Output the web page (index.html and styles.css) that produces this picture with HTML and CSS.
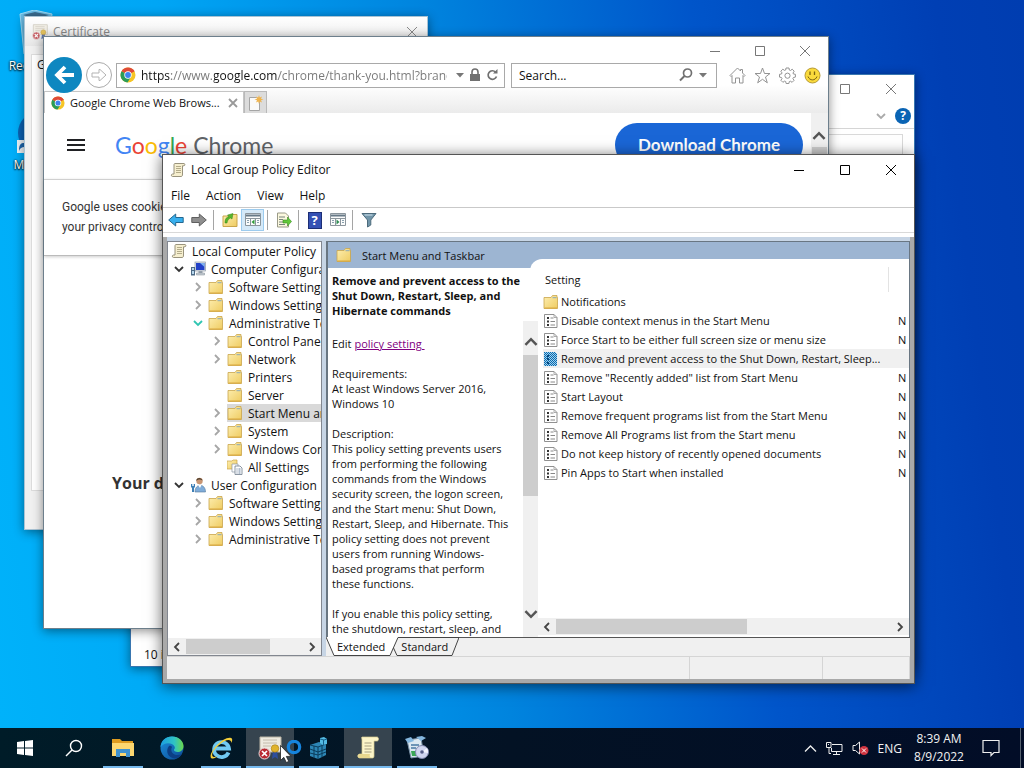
FILE: index.html
```html
<!DOCTYPE html>
<html lang="en">
<head>
<meta charset="utf-8">
<title>Desktop</title>
<link rel="stylesheet" href="styles.css">
</head>
<body>
<svg class="defs" aria-hidden="true">
  <defs>
    <linearGradient id="g-folder" x1="0" y1="0" x2="1" y2="1"><stop offset="0" stop-color="#fdeeb0"/><stop offset="1" stop-color="#efcc62"/></linearGradient>
    <linearGradient id="g-edge" x1="0" y1="0" x2="1" y2="0"><stop offset="0" stop-color="#1b9de2"/><stop offset=".6" stop-color="#2fc3c4"/><stop offset="1" stop-color="#6bd84a"/></linearGradient>
    <linearGradient id="g-edge2" x1="0" y1="0" x2="1" y2="1"><stop offset="0" stop-color="#1c8fdc"/><stop offset="1" stop-color="#0b4a94"/></linearGradient>
    <symbol id="folder" viewBox="0 0 16 16"><path d="M1 3.500h7l1.500-2h4.500v2h.5v11H1z" fill="url(#g-folder)" stroke="#c9a54b" stroke-width=".8"/><path d="M9.500 3.700h4" stroke="#8ba9b8" stroke-width="1"/><path d="M1.500 14h12.500" stroke="#dba93e"/></symbol>
    <symbol id="scroll" viewBox="0 0 16 16"><path d="M5 1.500h9c1 0 1.300 2 0 2.300h-1.500v8.200c0 2-.5 2.500-1.500 2.500H2.500c-1.500 0-1.500-2.500 0-2.500H4V3c0-1 .3-1.500 1-1.500z" fill="#f6efcf" stroke="#8d8770" stroke-width=".9"/><path d="M6 4.500h5M6 6.500h5M6 8.500h5M6 10.500h5" stroke="#a39a78" stroke-width=".8"/></symbol>
    <symbol id="computer" viewBox="0 0 16 16"><rect x="5" y="1" width="10.500" height="9" fill="#dfe4ea" stroke="#8d98a5" stroke-width=".7"/><path d="M6 2h8.500v7H6z" fill="#2140c8"/><path d="M10 2h4.500v4z" fill="#7fb0ee"/><path d="M8.500 10h4v2h-4z" fill="#98a2ad"/><path d="M6.500 12h8v2h-8z" fill="#c8ced5" stroke="#7e8893" stroke-width=".5"/><path d="M1 6h4v8.500H1z" fill="#4d6a85"/><path d="M2 7h2v2H2zM2 10h2v3H2z" fill="#b7d7ed"/></symbol>
    <symbol id="user" viewBox="0 0 16 16"><circle cx="9.500" cy="4" r="3.200" fill="#c99673"/><path d="M6.300 4C6 0 12 0 12.500 3.500 10 2 8 2.500 6.300 4z" fill="#51402e"/><path d="M5 15c0-9 10.500-9 10.500 0z" fill="#7facd9" stroke="#56789b" stroke-width=".6"/><path d="M8 8l2 3 1.500-3z" fill="#fff"/><path d="M1 7h1.300v2h1.400V7H5v3l-1 1v4H2v-4l-1-1z" fill="#3e7fb5"/></symbol>
    <symbol id="allset" viewBox="0 0 16 16"><path d="M0 2h5l1-1h4v9H0z" fill="url(#g-folder)" stroke="#c9a54b" stroke-width=".7"/><path d="M5 5h6v8H5z" fill="#fff" stroke="#8b97a5" stroke-width=".7"/><path d="M8 7h5l2 2v6.500H8z" fill="#fff" stroke="#6d7b8c" stroke-width=".8"/><path d="M9.500 10h1M9.500 12h1M9.500 14h1M11.500 10h2M11.500 12h2M11.500 14h2" stroke="#3d5d84" stroke-width=".8"/></symbol>
    <symbol id="policy" viewBox="0 0 16 16"><path d="M1.500 1.500h9.500l3 3v10H1.500z" fill="#fff" stroke="#858585" stroke-width=".9"/><path d="M11 1.500v3h3" fill="none" stroke="#999" stroke-width=".8"/><path d="M4 4h2v2H4zM4 7.500h2v2H4zM4 11h2v2H4z" fill="#333"/><path d="M7.500 5h3M7.500 8.500h4.500M7.500 12h4.500" stroke="#888"/></symbol>
    <pattern id="dither" width="2" height="2" patternUnits="userSpaceOnUse"><rect width="2" height="2" fill="#9fd0ee"/><path d="M0 0h1v1H0zM1 1h1v1H1z" fill="#0a6aae"/></pattern>
    <symbol id="policysel" viewBox="0 0 16 16"><path d="M1 1h11l2 2v12H1z" fill="url(#dither)"/><path d="M4 4h2v2H4zM4 7h2v2H4zM4 11h2v2H4z" fill="#064a80"/></symbol>
    <symbol id="chrome" viewBox="0 0 16 16"><circle cx="8" cy="8" r="7.500" fill="#f6c526"/><path d="M8 8L1.500 4.250A7.500 7.500 0 0 1 14.500 4.250z" fill="#df4a37"/><path d="M8 8L1.500 4.250A7.500 7.500 0 0 0 7.500 15.500L11 9.700z" fill="#2a9c58"/><path d="M8 4.300h6.500L14 3.500 8 3z" fill="#df4a37"/><circle cx="8" cy="8" r="3.700" fill="#fff"/><circle cx="8" cy="8" r="2.900" fill="#3f83ee"/></symbol>
    <symbol id="chev-r" viewBox="0 0 10 10"><path d="M3 1l4 4-4 4" fill="none" stroke="currentColor" stroke-width="1.800"/></symbol>
    <symbol id="chev-l" viewBox="0 0 10 10"><path d="M7 1L3 5l4 4" fill="none" stroke="currentColor" stroke-width="1.800"/></symbol>
    <symbol id="chev-d" viewBox="0 0 10 10"><path d="M1 3l4 4 4-4" fill="none" stroke="currentColor" stroke-width="1.800"/></symbol>
    <symbol id="chev-u" viewBox="0 0 10 10"><path d="M1 7l4-4 4 4" fill="none" stroke="currentColor" stroke-width="1.800"/></symbol>
    <symbol id="w-min" viewBox="0 0 12 12"><path d="M1 6.500h10" stroke="currentColor"/></symbol>
    <symbol id="w-max" viewBox="0 0 12 12"><path d="M1.500 1.500h9v9h-9z" fill="none" stroke="currentColor"/></symbol>
    <symbol id="w-close" viewBox="0 0 12 12"><path d="M1 1l10 10M11 1L1 11" fill="none" stroke="currentColor"/></symbol>
    <symbol id="cert" viewBox="0 0 24 24"><path d="M2 1h21v15H2z" fill="#eeeadf" stroke="#b9b3a4"/><path d="M5 4h14M5 7h14M5 10h8" stroke="#b7b0a0" stroke-width=".8"/><path d="M15 15l-1 8 3-2 3 2-1-8z" fill="#2e4f9d"/><circle cx="17" cy="12.500" r="3.800" fill="#e0b32c" stroke="#a47b12" stroke-width=".6"/><circle cx="6.500" cy="17.500" r="5.500" fill="#b92a31" stroke="#e9dcdc"/><path d="M4 15l5 5M9 15l-5 5" stroke="#fff" stroke-width="1.700"/></symbol>
    <symbol id="mmc" viewBox="0 0 18 16"><path d="M1.500 1.500h15v12h-15z" fill="#fbfcfc" stroke="#8b959c"/><path d="M2 3.500h14" stroke="#667987" stroke-width="2"/><path d="M2 6.500h14M6.500 7v6M11.500 7v6" stroke="#8b959c"/><path d="M3 8.500h2M3 10.500h2M13 8.500h2M13 10.500h2" stroke="#8aa0ae"/></symbol>
  </defs>
</svg>

<main class="desktop">
  <div class="shortcut bin">
    <svg width="48" height="48" viewBox="0 0 48 48"><path d="M4 4L18 0l18 4-5 40-16 3-7-3z" fill="#8fc5e5" opacity=".75" stroke="#d5ecf7"/><path d="M7 5l12-3 14 3-13 4z" fill="#3c6f93"/></svg>
    <span>Recycle Bin</span>
  </div>
  <div class="shortcut edge">
    <svg width="48" height="48" viewBox="0 0 48 48"><circle cx="24" cy="24" r="22" fill="#0b62b4"/><path d="M1 31h13v13H1z" fill="#eef4f8"/><path d="M3 42c0-7 2-8 5-8v-3l5 5-5 5v-3c-2 0-4 1-5 4z" fill="#1c66ae"/></svg>
    <span>Microsoft<br>Edge</span>
  </div>

  <section class="window cert" aria-label="Certificate">
    <header class="cert-title"><svg class="i16"><use href="#cert"/></svg><h2>Certificate</h2><button aria-label="Close"><svg class="i12"><use href="#w-close"/></svg></button></header>
    <div class="cert-body"><div class="cert-panel">General</div></div>
  </section>

  <section class="window files" aria-label="File Explorer">
    <div class="caption"><button aria-label="Maximize"><svg class="i12"><use href="#w-max"/></svg></button><button aria-label="Close"><svg class="i12"><use href="#w-close"/></svg></button></div>
    <div class="ribbon"><svg class="i10"><use href="#chev-d"/></svg><button class="help" aria-label="Help">?</button></div>
    <div class="files-bar"><div class="files-search"></div></div>
    <footer>10 items</footer>
  </section>

  <section class="window ie" aria-label="Internet Explorer">
    <div class="caption"><button aria-label="Minimize"><svg class="i12"><use href="#w-min"/></svg></button><button aria-label="Maximize"><svg class="i12"><use href="#w-max"/></svg></button><button aria-label="Close"><svg class="i12"><use href="#w-close"/></svg></button></div>
    <div class="navbar">
      <button class="back" aria-label="Back"><svg width="24" height="24" viewBox="0 0 24 24"><path d="M13 4l-8 8 8 8M5 12h17" fill="none" stroke="#fff" stroke-width="3.800"/></svg></button>
      <button class="fwd" aria-label="Forward"><svg width="16" height="16" viewBox="0 0 16 16"><path d="M1 6h7V2.500h1L15 8l-6 5.500H8V10H1z" fill="#fff" stroke="#b3b3b3"/></svg></button>
      <div class="address">
        <svg class="i16"><use href="#chrome"/></svg>
        <input aria-label="Address" value="https://www.google.com/chrome/thank-you.html?brand=USED">
        <svg width="8" height="5" viewBox="0 0 8 5"><path d="M0 0h8L4 4.500z" fill="#777"/></svg>
        <svg width="12" height="14" viewBox="0 0 12 14"><path d="M1 6h10v7H1z" fill="#707070"/><path d="M3 6V4a3 3 0 0 1 6 0v2" fill="none" stroke="#707070" stroke-width="1.600"/></svg>
        <svg width="13" height="14" viewBox="0 0 13 14"><path d="M10.500 8.500a4.300 4.300 0 1 1-1-4.500" fill="none" stroke="#707070" stroke-width="1.700"/><path d="M7 5.500h4.500V1z" fill="#707070"/></svg>
      </div>
      <div class="search">
        <input aria-label="Search" placeholder="Search...">
        <svg width="14" height="14" viewBox="0 0 14 14"><circle cx="8.500" cy="5" r="4" fill="none" stroke="#707070" stroke-width="1.700"/><path d="M5.500 8L1 12.500" stroke="#707070" stroke-width="2"/></svg>
        <svg width="8" height="5" viewBox="0 0 8 5"><path d="M0 0h8L4 4.500z" fill="#777"/></svg>
      </div>
      <div class="ie-tools">
        <button aria-label="Home"><svg width="17" height="17" viewBox="0 0 17 17"><path d="M1 8.500L8.500 1l3 3V2.500h2V6L16 8.500l-1 1-1-1V16h-3.500v-5h-4v5H3V8.500l-1 1z" fill="#fff" stroke="#939393"/></svg></button>
        <button aria-label="Favorites"><svg width="17" height="17" viewBox="0 0 17 17"><path d="M8.500 1l2 5.500H16l-4.500 3.500 1.800 5.800-4.800-3.500-4.800 3.500L5.500 10 1 6.500h5.500z" fill="#fff" stroke="#939393"/></svg></button>
        <button aria-label="Tools"><svg width="17" height="17" viewBox="0 0 17 17"><path d="M7 1h3l.3 2 1.200.5 1.700-1.300 2 2L14 6l.4 1 2 .3v2.800l-2 .4-.5 1.100 1.200 1.700-2 2-1.700-1.100-1.100.4-.4 1.900H7.100l-.4-2-1.100-.4-1.700 1.200-2-2L3 11.600l-.5-1.100-2-.4V7.300l2-.3.500-1.100-1.200-1.700 2-2 1.700 1.200L6.700 3z" fill="#fff" stroke="#939393"/><circle cx="8.500" cy="8.700" r="2.600" fill="#fff" stroke="#939393"/></svg></button>
        <button aria-label="Feedback"><svg width="17" height="17" viewBox="0 0 17 17"><circle cx="8.500" cy="8.500" r="7.500" fill="#fada3c" stroke="#b69a35"/><path d="M6 4.500v3.500M10.500 4.500v3.500" stroke="#7c6412" stroke-width="1.300"/><path d="M4 9.500c1.500 4.500 7.500 4.500 9 0" fill="none" stroke="#7c6412"/></svg></button>
      </div>
    </div>
    <div class="tabs">
      <div class="tab"><svg class="i14"><use href="#chrome"/></svg><span>Google Chrome Web Brows...</span><button aria-label="Close tab"><svg width="10" height="10" viewBox="0 0 10 10"><path d="M1 1l8 8M9 1L1 9" stroke="#999" stroke-width="1.800"/></svg></button></div>
      <button class="newtab" aria-label="New tab"><svg width="16" height="18" viewBox="0 0 16 18"><path d="M1.500 3.500h7l3 3v10h-10z" fill="#fafafa" stroke="#a5a5a5"/><path d="M11 1l.8 2.500L14 2.500l-1 2.200 2.500.8-2.500.8 1 2.200-2.200-1L11 10l-.8-2.500-2.200 1 1-2.200-2.500-.8L9 4.700 8 2.500l2.200 1z" fill="#efb44d"/></svg></button>
    </div>
    <div class="page">
      <div class="page-main">
        <div class="page-head">
          <button class="burger" aria-label="Menu"><svg width="18" height="14" viewBox="0 0 18 14"><path d="M0 2h18M0 7h18M0 12h18" stroke="#202124" stroke-width="2"/></svg></button>
          <div class="logo"><b class="blue">G</b><b class="red">o</b><b class="yellow">o</b><b class="blue">g</b><b class="green">l</b><b class="red">e</b> <span>Chrome</span></div>
          <a class="download" href="#">Download Chrome</a>
        </div>
        <div class="cookies">Google uses cookies to deliver its services.<br>your privacy controls.</div>
        <h1>Your download is starting</h1>
      </div>
      <div class="page-scroll"><svg width="14" height="14"><use href="#chev-u"/></svg><i></i></div>
    </div>
  </section>

  <section class="window gp" aria-label="Local Group Policy Editor">
    <header class="gp-title"><svg class="i16"><use href="#scroll"/></svg><h2>Local Group Policy Editor</h2>
      <div class="caption"><button aria-label="Minimize"><svg class="i12"><use href="#w-min"/></svg></button><button aria-label="Maximize"><svg class="i12"><use href="#w-max"/></svg></button><button aria-label="Close"><svg class="i12"><use href="#w-close"/></svg></button></div>
    </header>
    <nav class="menu"><button>File</button><button>Action</button><button>View</button><button>Help</button></nav>
    <div class="toolbar">
      <button aria-label="Back"><svg width="16" height="16" viewBox="0 0 16 16"><path d="M.7 8l7-6v3.500h7.500v5H7.700V14z" fill="#38b0ee" stroke="#24678f"/></svg></button>
      <button aria-label="Forward"><svg width="16" height="16" viewBox="0 0 16 16"><path d="M15.300 8l-7-6v3.500H.8v5h7.500V14z" fill="#8f8f8f" stroke="#5f5f5f"/></svg></button>
      <i></i>
      <button aria-label="Up"><svg width="16" height="16" viewBox="0 0 16 16"><path d="M1 4h8l1-1.500h5v12H1z" fill="url(#g-folder)" stroke="#c9a54b"/><path d="M3 11c0-5 2-6 4-6L5.500 3 11 1.500 10 7 8.500 6C6.500 7 5.500 8 5 11z" fill="#57b52c" stroke="#37841a" stroke-width=".5"/></svg></button>
      <button class="on" aria-label="Show console tree"><svg width="18" height="16" viewBox="0 0 18 16"><use href="#mmc"/><path d="M10.500 7.500v5L7.500 10z" fill="#2f9c39"/></svg></button>
      <i></i>
      <button aria-label="Export list"><svg width="16" height="16" viewBox="0 0 16 16"><path d="M1.500 1h8l3 3v11h-11z" fill="#fbf8df" stroke="#9a9a88"/><path d="M3 5h6M3 7.500h4M3 10h4M3 12.500h6" stroke="#77837d"/><path d="M7 8h4.500V5l4 4.500-4 4.500v-3H7z" fill="#62c83b" stroke="#3b8d22" stroke-width=".6"/></svg></button>
      <i></i>
      <button class="q" aria-label="Help"><span>?</span></button>
      <button aria-label="Show action pane"><svg width="18" height="16" viewBox="0 0 18 16"><use href="#mmc"/><path d="M7.500 7.500v5l3-2.500z" fill="#2f8c52"/></svg></button>
      <i></i>
      <button aria-label="Filter"><svg width="16" height="16" viewBox="0 0 16 16"><path d="M1 1.500h14L9.800 8v5L6.500 15V8z" fill="#7195a9" stroke="#4d6b7c"/><path d="M3.500 3h8" stroke="#bcd3df" stroke-width="1.300"/></svg></button>
    </div>
    <div class="client">
      <div class="panes">
        <div class="tree">
          <ul>
            <li class="l0"><svg class="i16"><use href="#scroll"/></svg>Local Computer Policy</li>
            <li class="l1"><svg class="tw dark"><use href="#chev-d"/></svg><svg class="i16"><use href="#computer"/></svg>Computer Configuration</li>
            <li class="l2"><svg class="tw"><use href="#chev-r"/></svg><svg class="i16"><use href="#folder"/></svg>Software Settings</li>
            <li class="l2"><svg class="tw"><use href="#chev-r"/></svg><svg class="i16"><use href="#folder"/></svg>Windows Settings</li>
            <li class="l2"><svg class="tw teal"><use href="#chev-d"/></svg><svg class="i16"><use href="#folder"/></svg>Administrative Templates</li>
            <li class="l3"><svg class="tw"><use href="#chev-r"/></svg><svg class="i16"><use href="#folder"/></svg>Control Panel</li>
            <li class="l3"><svg class="tw"><use href="#chev-r"/></svg><svg class="i16"><use href="#folder"/></svg>Network</li>
            <li class="l3"><svg class="tw"></svg><svg class="i16"><use href="#folder"/></svg>Printers</li>
            <li class="l3"><svg class="tw"></svg><svg class="i16"><use href="#folder"/></svg>Server</li>
            <li class="l3"><svg class="tw"><use href="#chev-r"/></svg><span class="sel"><svg class="i16"><use href="#folder"/></svg>Start Menu and Taskbar</span></li>
            <li class="l3"><svg class="tw"><use href="#chev-r"/></svg><svg class="i16"><use href="#folder"/></svg>System</li>
            <li class="l3"><svg class="tw"><use href="#chev-r"/></svg><svg class="i16"><use href="#folder"/></svg>Windows Components</li>
            <li class="l3"><svg class="tw"></svg><svg class="i16"><use href="#allset"/></svg>All Settings</li>
            <li class="l1"><svg class="tw dark"><use href="#chev-d"/></svg><svg class="i16"><use href="#user"/></svg>User Configuration</li>
            <li class="l2"><svg class="tw"><use href="#chev-r"/></svg><svg class="i16"><use href="#folder"/></svg>Software Settings</li>
            <li class="l2"><svg class="tw"><use href="#chev-r"/></svg><svg class="i16"><use href="#folder"/></svg>Windows Settings</li>
            <li class="l2"><svg class="tw"><use href="#chev-r"/></svg><svg class="i16"><use href="#folder"/></svg>Administrative Templates</li>
          </ul>
          <div class="hbar"><svg class="i10"><use href="#chev-l"/></svg><div class="track"><i class="t-tree"></i></div><svg class="i10"><use href="#chev-r"/></svg></div>
        </div>
        <div class="detail">
          <div class="view">
            <div class="view-head"><svg class="i16"><use href="#folder"/></svg>Start Menu and Taskbar</div>
            <div class="split">
              <div class="info">
                <h3>Remove and prevent access to the Shut Down, Restart, Sleep, and Hibernate commands</h3>
                <div class="info-row">
                  <div class="desc">
                    <p>Edit <a href="#">policy setting&nbsp;</a></p>
                    <p>Requirements:<br>At least Windows Server 2016,<br>Windows 10</p>
                    <p>Description:<br>This policy setting prevents users<br>from performing the following<br>commands from the Windows<br>security screen, the logon screen,<br>and the Start menu: Shut Down,<br>Restart, Sleep, and Hibernate. This<br>policy setting does not prevent<br>users from running Windows-<br>based programs that perform<br>these functions.</p>
                    <p>If you enable this policy setting,<br>the shutdown, restart, sleep, and</p>
                  </div>
                  <div class="vbar"><svg width="14" height="14"><use href="#chev-u"/></svg><div class="vtrack"><i></i></div><svg width="14" height="14"><use href="#chev-d"/></svg></div>
                </div>
              </div>
              <div class="list">
                <table>
                  <thead><tr><th>Setting</th><th class="st" aria-label="State"></th></tr></thead>
                  <tbody>
                    <tr><td><svg class="i16"><use href="#folder"/></svg>Notifications</td><td></td></tr>
                    <tr><td><svg class="i16"><use href="#policy"/></svg>Disable context menus in the Start Menu</td><td>N</td></tr>
                    <tr><td><svg class="i16"><use href="#policy"/></svg>Force Start to be either full screen size or menu size</td><td>N</td></tr>
                    <tr class="cur"><td><svg class="i16"><use href="#policysel"/></svg>Remove and prevent access to the Shut Down, Restart, Sleep...</td><td></td></tr>
                    <tr><td><svg class="i16"><use href="#policy"/></svg>Remove "Recently added" list from Start Menu</td><td>N</td></tr>
                    <tr><td><svg class="i16"><use href="#policy"/></svg>Start Layout</td><td>N</td></tr>
                    <tr><td><svg class="i16"><use href="#policy"/></svg>Remove frequent programs list from the Start Menu</td><td>N</td></tr>
                    <tr><td><svg class="i16"><use href="#policy"/></svg>Remove All Programs list from the Start menu</td><td>N</td></tr>
                    <tr><td><svg class="i16"><use href="#policy"/></svg>Do not keep history of recently opened documents</td><td>N</td></tr>
                    <tr><td><svg class="i16"><use href="#policy"/></svg>Pin Apps to Start when installed</td><td>N</td></tr>
                  </tbody>
                </table>
                <div class="hbar"><svg class="i10"><use href="#chev-l"/></svg><div class="track"><i class="t-list"></i></div><svg class="i10"><use href="#chev-r"/></svg></div>
              </div>
            </div>
          </div>
          <div class="sheet-tabs">
            <svg width="10" height="19" viewBox="0 0 10 19"><path d="M0 0h10v18H8z" fill="#fff"/><path d="M0 0l8 18.500h2" fill="none" stroke="#444"/></svg>
            <button class="active">Extended</button>
            <svg width="14" height="19" viewBox="0 0 14 19"><path d="M0 0h12L4 18H0z" fill="#fff"/><path d="M0 18.500h4L12 .5h2M7.500 11l3.500 7.500h3" fill="none" stroke="#444"/></svg>
            <button>Standard</button>
            <svg width="10" height="19" viewBox="0 0 10 19"><path d="M0 18.500h3L10 .5M0 .5h10" fill="none" stroke="#444"/></svg>
            <div class="rest"></div>
          </div>
        </div>
      </div>
      <div class="status"><span></span><span></span><span></span></div>
    </div>
  </section>
</main>

<footer class="taskbar">
  <button class="task start" aria-label="Start"><svg width="16" height="16" viewBox="0 0 16 16"><path d="M0 2l7-1v6.500H0zM8 1l8-1v7.500H8zM0 8.500h7V15l-7-1zM8 8.500h8V16l-8-1z" fill="#fff"/></svg></button>
  <button class="task" aria-label="Search"><svg width="18" height="18" viewBox="0 0 18 18"><circle cx="11" cy="7" r="5.500" fill="none" stroke="#fff" stroke-width="1.400"/><path d="M7 11l-6 6" stroke="#fff" stroke-width="1.400"/></svg></button>
  <button class="task open" aria-label="File Explorer"><svg width="24" height="20" viewBox="0 0 24 20"><path d="M1 1h8l2 2h11v4H1z" fill="#dd9b20"/><path d="M1 5h22v13H1z" fill="#fcd770"/><path d="M5 11h14v8h-4v-4H9v4H5z" fill="#3f92cf"/></svg></button>
  <button class="task" aria-label="Microsoft Edge"><svg width="24" height="24" viewBox="0 0 24 24"><circle cx="12" cy="12" r="11.500" fill="url(#g-edge2)"/><path d="M.5 11C1 4.500 6 .5 12 .5c7 0 11.500 5 11.500 9.500 0 4-3 6-6 6-2 0-4-1-3.500-2.500 1-1 1-2 .5-3C12 6 4 6 .5 11z" fill="url(#g-edge)"/><path d="M9 10c-4 5-1 12 6 12.500 3-.5 5.500-2 7-4.500-4 2-8 1-9.500-1C11 15 11 13 12 11c-.5-1-2-1.500-3-1z" fill="#0c3f85"/></svg></button>
  <button class="task open" aria-label="Internet Explorer"><svg width="24" height="24" viewBox="0 0 24 24"><path d="M19.500 16.500A7.500 7.500 0 1 1 20 12.500H6" fill="none" stroke="#71c9f2" stroke-width="3.800"/><path d="M2 22C-1 17 14 0 22 2c2 1 1 3 .5 5C22 2 16 4 10 9S1 20 5 21c2 0 4-1 5-2-3 3-6 4.500-8 3z" fill="#f5cf3a"/></svg></button>
  <button class="task open wide" aria-label="Certificate"><svg width="24" height="24"><use href="#cert"/></svg></button>
  <button class="task open" aria-label="Registry Editor"><svg width="22" height="24" viewBox="0 0 22 24"><path d="M2 9l9-3 7 2v11l-8 4-8-3z" fill="#2d86b5"/><path d="M2 9l8 2 8-3M2 13l8 3 8-3M2 17l8 2 8-3M6 10v12M10 11v12M14 10v11" stroke="#0b3c5b" fill="none"/><path d="M12 2l4-1 3 2v5l-4 1-3-2z" fill="#55bce5"/><path d="M12 3l4 1 3-1M15.500 4v5" stroke="#17618a" fill="none"/></svg></button>
  <button class="task open wide" aria-label="Local Group Policy Editor"><svg width="22" height="24" viewBox="0 0 22 24"><path d="M5 1h15c2 0 2 4 0 4h-3v15c0 2-1 2-2 2H3c-3 0-3-4 0-4h2V4c0-2-1-2 0-3z" fill="#fcf5c9" stroke="#d8cb8d" stroke-width=".7"/><path d="M7.500 7h7M7.500 10h7M7.500 13h7M7.500 16h7" stroke="#a69f80"/><path d="M2 18h11c-1 2 0 4 2 4H3c-2 0-2.500-2-1-4z" fill="#e9d88e"/></svg></button>
  <button class="task open" aria-label="Installer"><svg width="24" height="24" viewBox="0 0 24 24"><path d="M2 4l14-2 3 18-13 2z" fill="#dbe8f1" stroke="#7890a6"/><path d="M0 3l6-2 3 4-6 2zM11 1l6-1 4 2-5 3z" fill="#84b7df"/><path d="M6 9h8M6 12h5" stroke="#4a78a3" stroke-width="1.500"/><path d="M6 15h5v5H7z" fill="#3aa657"/><circle cx="17" cy="16" r="6.500" fill="#cfd5ef" stroke="#8088ad"/><path d="M17 16l5-4a6 6 0 0 1 1 5z" fill="#f3f5ff"/><circle cx="17" cy="16" r="1.800" fill="#555d88"/></svg></button>
  <div class="tray">
    <svg width="13" height="13" viewBox="0 0 13 13"><path d="M1 9.500L6.500 4 12 9.500" fill="none" stroke="#eee" stroke-width="1.300"/></svg>
    <svg width="17" height="15" viewBox="0 0 17 15"><path d="M6 3.500h10v7H5.500V7M10.500 10.500v3M7 13.500h7M.5 1.500h4.500v5H.5zM3 6.500v6h2" fill="none" stroke="#eee"/><path d="M2 3h1v1H2z" fill="#eee"/></svg>
    <svg width="17" height="16" viewBox="0 0 17 16"><path d="M1 5.500h2.500l4-3.500v12l-4-3.500H1z" fill="none" stroke="#eee"/><circle cx="12" cy="10.500" r="4.500" fill="#cf3440"/><path d="M10 8.500l4 4M14 8.500l-4 4" stroke="#fff"/></svg>
    <span>ENG</span>
    <time>8:39 AM<br>8/9/2022</time>
    <svg width="18" height="18" viewBox="0 0 18 18"><path d="M1 1.500h16v12h-5l-3 3v-3H1z" fill="none" stroke="#eee" stroke-width="1.200"/></svg>
  </div>
</footer>
<svg class="pointer" width="24" height="24" viewBox="0 0 24 24" aria-hidden="true"><circle cx="14" cy="7" r="5.700" fill="none" stroke="#1684dd" stroke-width="3.200"/><path d="M.5 5.500v15l3.300-3.200 2.500 5.200 2.500-1.100-2.500-5h4.700z" fill="#fff" stroke="#222" stroke-width=".8"/></svg>
</body>
</html>
```
FILE: styles.css
```css
* { box-sizing: border-box; }
html, body { height: 100%; }
body {
  margin: 0;
  display: flex;
  flex-direction: column;
  overflow: hidden;
  position: relative;
  font: 12px/15px "Open Sans", "Noto Sans", sans-serif;
  color: #111;
}
h1, h2, h3, p, ul { margin: 0; padding: 0; }
h2 { font-size: 12px; font-weight: 400; }
button { border: 0; padding: 0; margin: 0; background: none; font: inherit; color: inherit; display: flex; align-items: center; justify-content: center; }
input { border: 0; padding: 0; min-width: 0; outline: 0; background: none; font: inherit; }
svg { display: block; flex: none; }
.defs { position: absolute; width: 0; height: 0; }
.i10 { width: 10px; height: 10px; }
.i12 { width: 12px; height: 12px; }
.i14 { width: 14px; height: 14px; }
.i16 { width: 16px; height: 16px; }

.desktop {
  flex: 1;
  position: relative;
  overflow: hidden;
  background: linear-gradient(83deg, #00b2fa 0%, #00a6f5 22%, #0084de 46%, #0055ca 70%, #003fb4 92%, #003db0 100%);
}
.shortcut { position: absolute; width: 76px; display: flex; flex-direction: column; align-items: center; gap: 0; color: #fff; text-align: center; text-shadow: 0 1px 2px #000, 0 0 2px #000; white-space: nowrap; }
.bin { left: 2px; top: 10px; }
.edge { left: 2px; top: 109px; }

.window { position: absolute; display: flex; flex-direction: column; background: #fff; border: 1px solid #6d7f8c; box-shadow: 0 2px 10px rgba(0, 0, 0, .45); }
.caption { display: flex; justify-content: flex-end; color: #777; }
.caption button { width: 46px; height: 28px; }

.cert { left: 24px; top: 16px; width: 404px; height: 514px; border-color: #a9c3d4; }
.cert-title { display: flex; align-items: center; gap: 5px; height: 29px; padding: 0 9px 0 7px; background: linear-gradient(#fff, #e6e6e6); color: #888; }
.cert-title h2 { flex: 1; }
.cert-title .i16 { opacity: .75; }
.cert-body { flex: 1; padding: 8px 6px 38px; background: #f0f0f0; }
.cert-panel { height: 100%; padding: 2px 5px; background: #fff; border: 1px solid #dcdcdc; }

.files { left: 130px; top: 74px; width: 785px; height: 593px; border-color: #3876b0; }
.ribbon { display: flex; justify-content: flex-end; align-items: center; gap: 9px; height: 26px; padding-right: 3px; border-bottom: 1px solid #d5d5d5; color: #aaa; }
.help { width: 16px; height: 16px; border-radius: 50%; background: #0a64b4; color: #fff; font-weight: 700; }
.files-bar { flex: 1; padding: 5px 11px; }
.files-search { height: 24px; border: 1px solid #d9d9d9; }
.files footer { height: 24px; padding: 5px 13px; }

.ie { left: 43px; top: 36px; width: 786px; height: 593px; }
.ie > .caption { height: 28px; padding-right: 1px; }
.ie > .caption button { width: 45px; }
.navbar { display: flex; align-items: center; height: 20px; padding: 0 7px 0 2px; position: relative; z-index: 1; }
.back { width: 36px; height: 36px; border-radius: 50%; background: #0e87c0; flex: none; }
.fwd { width: 26px; height: 26px; border: 1px solid #aaa; border-radius: 50%; margin: 0 4px; flex: none; }
.address, .search { display: flex; align-items: center; height: 25px; border: 1px solid #a9a9a9; background: #fff; }
.address { flex: 395 1 395px; gap: 5px; padding: 0 5px 0 3px; }
.address input { flex: 1; margin-right: 4px; color: transparent; background: linear-gradient(90deg, #111 30px, #777 30px, #777 73px, #111 73px, #111 137px, #777 137px); -webkit-background-clip: text; background-clip: text; }
.search { flex: 202 1 202px; margin-left: 6px; padding: 0 9px 0 7px; gap: 6px; }
.search input { flex: 1; }
.search input::placeholder { color: #111; opacity: 1; }
.ie-tools { display: flex; gap: 8px; margin-left: 12px; }
.tabs { display: flex; height: 28px; padding-top: 6px; background: linear-gradient(#fff, #ebebeb); }
.tab { display: flex; align-items: center; gap: 5px; width: 200px; padding: 0 5px 0 6px; background: #fff; border: 1px solid #c5c5c5; border-bottom: 0; white-space: nowrap; font-size: 11px; }
.tab span { flex: 1; }
.newtab { width: 23px; background: #dcdcdc; border: 1px solid #b9b9b9; border-bottom: 0; }
.page { flex: 1; display: flex; }
.page-main { flex: 1; }
.page-head { display: flex; align-items: center; height: 66px; padding: 0 8px 3px 23px; }
.logo { flex: 1; margin-left: 30px; font: 400 23px/28px Lato, sans-serif; color: #5f6368; }
.logo b { font-weight: 400; }
.blue { color: #4285f4; } .red { color: #ea4335; } .yellow { color: #fbbc05; } .green { color: #34a853; }
.download { display: flex; align-items: center; justify-content: center; width: 188px; height: 44px; border-radius: 22px; background: #1a66d6; color: #fff; font: 700 17px/20px Lato, sans-serif; text-decoration: none; }
.cookies { height: 77px; padding: 17px 18px; border-top: 1px solid #d0d0d0; border-bottom: 1px solid #bbb; box-shadow: 0 1px 3px rgba(0, 0, 0, .2); font: 12px/20px Roboto, sans-serif; color: #333; }
.page-main h1 { padding: 217px 0 0 68px; font: 700 16px/20px "Open Sans", sans-serif; color: #333; }
.page-scroll { width: 17px; padding: 16px 1px 0; background: #f0f0f0; color: #555; }
.page-scroll i { display: block; height: 300px; margin-top: 4px; background: #cdcdcd; }

.gp { left: 162px; top: 154px; width: 753px; height: 530px; border-color: #555; box-shadow: 0 2px 14px rgba(0, 0, 0, .6); }
.gp-title { display: flex; align-items: center; height: 29px; padding-left: 7px; gap: 5px; }
.gp-title h2 { flex: 1; }
.gp-title .caption { color: #000; }
.menu { display: flex; height: 24px; padding: 0 0 1px 0; border-bottom: 1px solid #c9c9c9; }
.menu button { padding: 0 8px; }
.toolbar { display: flex; align-items: center; height: 25px; padding-left: 1px; border-bottom: 1px solid #d9d9d9; }
.toolbar button { width: 23px; height: 22px; }
.toolbar i { width: 1px; height: 20px; margin: 0 4px 0 3px; background: #a5a5a5; }
.toolbar .on { background: #d5e9f8; border: 1px solid #9ccbee; }
.q span { width: 14px; height: 17px; background: #3551b4; border: 1px solid #1d2e75; color: #fff; font: 700 13px/15px "Open Sans", sans-serif; }
.client { flex: 1; min-height: 0; display: flex; flex-direction: column; margin-top: 4px; padding: 0 4px 4px; background: #a9a9a9; }
.panes { flex: 1; min-height: 0; display: flex; gap: 4px; padding-top: 4px; background: #c7d5e5; }
.tree { width: 155px; flex: none; display: flex; flex-direction: column; border: 1px solid #828790; background: #fff; }
.tree ul { flex: 1; list-style: none; overflow: hidden; }
.tree li { display: flex; align-items: center; gap: 5px; height: 18px; white-space: nowrap; }
.l0 { padding-left: 3px; }
.l1 { padding-left: 6px; }
.l2 { padding-left: 25px; }
.l3 { padding-left: 44px; }
.tw { width: 10px; height: 10px; color: #a6a6a6; }
.dark { color: #333; margin-right: 1px; }
.teal { color: #30c5b2; }
.sel { display: flex; align-items: center; gap: 5px; height: 18px; background: #d9d9d9; }
.hbar { display: flex; align-items: center; height: 17px; padding: 0 4px; gap: 4px; background: #f0f0f0; color: #444; }
.track { flex: 1; height: 15px; }
.track i { display: block; height: 100%; background: #cdcdcd; }
.t-tree { width: 72%; }
.t-list { width: 57%; }
.detail { flex: 1; min-width: 0; display: flex; flex-direction: column; background: #f0f0f0; font-size: 11px; }
.view { flex: 1; min-height: 0; display: flex; flex-direction: column; border: 2px solid #697682; border-width: 1px 1px 0 2px; background: #9db5d2; }
.view-head { display: flex; align-items: center; gap: 10px; height: 17px; padding: 9px 8px 0; }
.split { flex: 1; min-height: 0; display: flex; }
.info { width: 210px; flex: none; display: flex; flex-direction: column; margin-top: 9px; background: #fff; }
.info h3 { padding: 5px 4px 3px; font-size: 11px; line-height: 15px; font-weight: 700; }
.info-row { flex: 1; min-height: 0; display: flex; position: relative; z-index: 1; background: #fff; }
.desc { flex: 1; overflow: hidden; padding: 15px 0 0 4px; white-space: nowrap; }
.desc p { margin-bottom: 15px; }
.desc a { color: #800080; }
.vbar { width: 15px; display: flex; flex-direction: column; align-items: center; padding: 14px 0 16px; background: #f0f0f0; color: #555; }
.vtrack { flex: 1; align-self: stretch; padding-top: 6px; }
.vtrack i { display: block; height: 56%; background: #cdcdcd; }
.list { flex: 1; min-width: 0; display: flex; flex-direction: column; margin-left: -8px; border-radius: 12px 0 0 0; background: #fff; position: relative; }
.list table { flex: none; width: 100%; margin: 8px 0 auto; padding-left: 13px; border-spacing: 0; table-layout: fixed; }
.list th { height: 25px; padding: 0 0 0 2px; text-align: left; font-weight: 400; border-right: 1px solid #e3e3e3; }
.list .st { width: 20px; border: 0; }
.list td { height: 19px; padding: 0; white-space: nowrap; }
.list td:last-child { padding-left: 9px; }
.list td .i16 { float: left; margin-right: 2px; }
.cur td { background: #f0f0f0; }
.list .hbar { margin: 0 0 2px 8px; }
.sheet-tabs { display: flex; height: 19px; }
.sheet-tabs button { padding: 0 1px; border-bottom: 1px solid #444; }
.sheet-tabs button:not(.active) { border-top: 1px solid #444; }
.sheet-tabs .active { background: #fff; }
.rest { flex: 1; border-top: 1px solid #555; }
.status { display: flex; height: 23px; background: #f0f0f0; border-top: 1px solid #d5d5d5; }
.status span { border-right: 1px solid #d5d5d5; flex: 86; }
.status span:first-child { flex: 523; }
.status span:nth-child(2) { flex: 133; }

.taskbar { flex: none; height: 40px; display: flex; gap: 1px; padding-left: 1px; background: linear-gradient(90deg, #001c28, #031224 50%, #020d27); color: #f2f2f2; }
.task { width: 48px; height: 40px; position: relative; }
.task.open::after { content: ""; position: absolute; left: 4px; right: 4px; bottom: 0; height: 2px; background: #76b9ed; }
.task.wide { background: #36444f; }
.task.wide::after { left: 0; right: 0; }
.tray { margin-left: auto; display: flex; align-items: center; gap: 9px; margin-right: 3px; padding-right: 20px; border-right: 1px solid #56616f; }
.tray time { width: 56px; line-height: 18px; text-align: center; }
.tray time + svg { margin-left: 6px; }
.pointer { position: absolute; left: 280px; top: 740px; }
```
